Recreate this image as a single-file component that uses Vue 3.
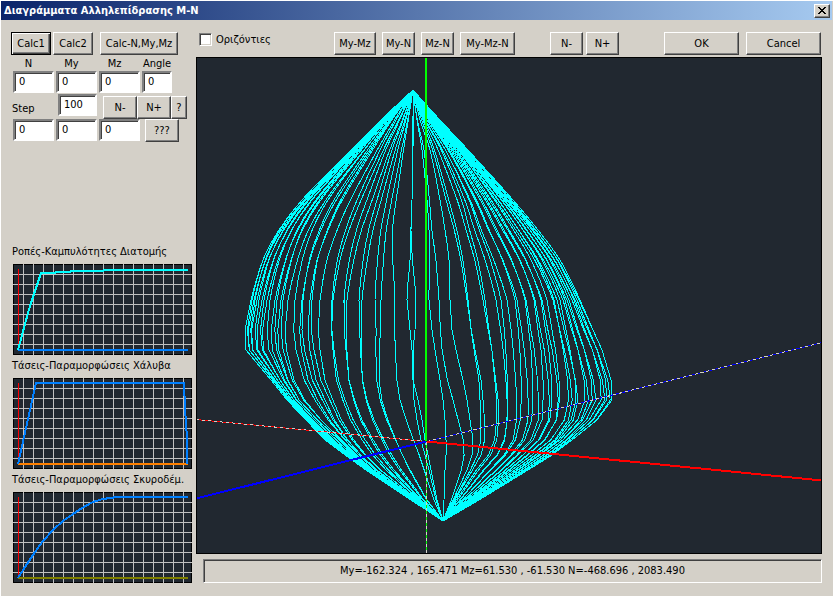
<script setup>

import { ref, reactive, computed } from "vue";


const horizontal = ref(false);

const step = ref("100");

const forces = reactive([
    { id: "n", label: "N", value: "0" },
    { id: "my", label: "My", value: "0" },
    { id: "mz", label: "Mz", value: "0" },
    { id: "angle", label: "Angle", value: "0" }
]);

const results = reactive([
    { id: "rn", label: "Result N", value: "0" },
    { id: "rmy", label: "Result My", value: "0" },
    { id: "rmz", label: "Result Mz", value: "0" }
]);

const range = {
    my: [-162.324, 165.471],
    mz: [61.530, -61.530],
    n: [-468.696, 2083.490]
};

const statusText = computed(() => {
    const f = pair => pair.map(v => v.toFixed(3)).join(" , ");
    return `My=${f(range.my)} Mz=${f(range.mz)} N=${f(range.n)}`;
});


// small charts, 179 x 91
const charts = [
    {
        id: "mk",
        title: "Ροπές-Καμπυλότητες Διατομής",
        points: "5,86 12,60 17,42 28,9 42,9 43,8 57,8 58,7 90,7 91,6 175,6",
        color: "#00ffff",
        base: "#0080ff"
    },
    {
        id: "steel",
        title: "Τάσεις-Παραμορφώσεις Χάλυβα",
        points: "5,86 23,5 171,5 172,30 174,60 174,86",
        color: "#0080ff",
        base: "#ff8000"
    },
    {
        id: "concrete",
        title: "Τάσεις-Παραμορφώσεις Σκυροδέμ.",
        points: "5,86 12,75 22,60 30,49 40,38 50,29 60,22 69,16 80,10 90,7 104,5 175,5",
        color: "#0080ff",
        base: "#808000"
    }
];

const gridX = Array.from({ length: 17 }, (_, i) => 10 + i * 10);
const gridY = Array.from({ length: 8 }, (_, i) => 10 + i * 10);


// interaction surface: meridians at fixed levels of N
const levels = [90, 120, 150, 200, 230, 260, 300, 330, 350, 380, 400, 420, 440, 455, 470, 500, 521];

const leftProfiles = [
    [413, 381, 351, 302, 279, 263, 251, 245, 246, 271, 287, 306, 325, 345, 366, 411, 443],
    [413, 387, 362, 322, 304, 293, 283, 280, 281, 289, 300, 318, 340, 355, 372, 415, 443],
    [413, 392, 373, 343, 329, 318, 311, 309, 311, 317, 326, 335, 348, 361, 377, 417, 443],
    [413, 402, 389, 371, 360, 352, 345, 344, 345, 347, 352, 359, 370, 379, 391, 420, 443],
    [413, 407, 400, 389, 383, 379, 375, 375, 374, 374, 377, 383, 391, 398, 406, 425, 443],
    [413, 409, 405, 398, 394, 394, 395, 393, 392, 391, 393, 399, 407, 413, 418, 430, 443],
    [413, 413, 413, 412, 411, 410, 407, 410, 412, 413, 414, 417, 421, 425, 429, 436, 443],
    [413, 413, 412, 412, 411, 413, 416, 415, 413, 413, 418, 422, 425, 428, 431, 437, 443]
];

const rightProfiles = [
    [413, 417, 422, 427, 429, 430, 429, 432, 435, 440, 443, 445, 446, 446, 445, 444, 443],
    [413, 418, 427, 431, 433, 437, 439, 439, 439, 441, 445, 449, 453, 454, 452, 447, 443],
    [413, 420, 430, 440, 445, 449, 450, 452, 456, 463, 467, 470, 473, 472, 467, 453, 443],
    [413, 423, 434, 448, 456, 462, 467, 470, 473, 478, 479, 480, 480, 477, 470, 454, 443],
    [413, 425, 441, 461, 469, 477, 484, 488, 491, 494, 496, 496, 494, 488, 476, 456, 443],
    [413, 428, 447, 472, 483, 495, 507, 510, 511, 512, 512, 511, 508, 500, 486, 461, 443],
    [413, 432, 455, 487, 504, 520, 534, 538, 541, 543, 543, 542, 533, 518, 502, 466, 443],
    [413, 436, 462, 502, 523, 542, 560, 566, 570, 575, 576, 571, 556, 536, 515, 473, 443],
    [413, 440, 468, 513, 538, 560, 580, 593, 602, 611, 612, 597, 572, 552, 528, 479, 443]
];

// position of every meridian at the N = 300 level
const leftLines = [
    251, 252, 254, 255, 257, 259, 262, 264, 267, 270, 275, 277, 281, 283, 288, 295,
    302, 303, 310, 312, 320, 332, 333, 344, 347, 359, 362, 375, 381, 395, 407, 416
];

const rightLines = [
    429, 439, 450, 467, 468, 483, 485, 496, 501, 507, 515, 517, 525, 526, 534, 535,
    541, 542, 547, 553, 554, 557, 560, 563, 565, 567, 569, 572, 574, 575, 577, 579, 580
];

const AT = levels.indexOf(300);

function valueAt(x, k, profiles) {
    const last = profiles.length - 1;
    const pos = Math.min(Math.max(x, profiles[0][AT]), profiles[last][AT]);

    let i = 0;
    while (i < last - 1 && profiles[i + 1][AT] < pos) i++;

    const a = profiles[i];
    const b = profiles[i + 1];
    const t = (pos - a[AT]) / (b[AT] - a[AT]);

    return a[k] + (b[k] - a[k]) * t;
}

// smooth in the compression part, straight segments below it
function toPath(xs) {
    const tangents = xs.map((_, i) => {
        const a = Math.max(i - 1, 0);
        const b = Math.min(i + 1, xs.length - 1);
        return (xs[b] - xs[a]) / (levels[b] - levels[a]);
    });

    let d = `M${xs[0]} ${levels[0]}`;
    for (let i = 1; i < xs.length; i++) {
        const end = `${xs[i].toFixed(1)} ${levels[i]}`;
        if (i > AT) {
            d += `L${end}`;
            continue;
        }
        const h = (levels[i] - levels[i - 1]) / 3;
        const c1 = (xs[i - 1] + tangents[i - 1] * h).toFixed(1);
        const c2 = (xs[i] - tangents[i] * h).toFixed(1);
        d += `C${c1} ${levels[i - 1] + h} ${c2} ${levels[i] - h} ${end}`;
    }
    return d;
}

// every second meridian lies on the far side and leans a little
function meridian(x, index, profiles) {
    const lean = index % 2 ? 1 / 25 : 0;
    return toPath(levels.map((y, k) => valueAt(x + (y - 300) * lean, k, profiles)));
}

const meridians = [
    ...leftLines.map((x, i) => meridian(x, i, leftProfiles)),
    ...rightLines.map((x, i) => meridian(x, i, rightProfiles))
];

</script>


<template>

<div class="dialog">

    <header class="titlebar">
        <h1>Διαγράμματα Αλληλεπίδρασης Μ-Ν</h1>
        <button class="close" type="button" aria-label="Close">
            <svg width="8" height="7" viewBox="0 0 8 7">
                <path d="M0 0h2v1h1v1h2v-1h1v-1h2v1h-1v1h-1v1h-1v1h1v1h1v1h1v1h-2v-1h-1v-1h-2v1h-1v1h-2v-1h1v-1h1v-1h1v-1h-1v-1h-1v-1h-1z" />
            </svg>
        </button>
    </header>

    <main class="body">

        <!-- input panel -->
        <aside class="side">

            <div class="row calc">
                <button class="btn default" type="button">Calc1</button>
                <button class="btn" type="button">Calc2</button>
                <button class="btn wide" type="button">Calc-N,My,Mz</button>
            </div>

            <div class="row fields">
                <div v-for="f in forces" :key="f.id" class="field">
                    <label :for="f.id">{{ f.label }}</label>
                    <input :id="f.id" v-model="f.value" type="text">
                </div>
            </div>

            <div class="row step">
                <label for="step">Step</label>
                <input id="step" v-model="step" type="text">
                <button class="btn first" type="button">N-</button>
                <button class="btn" type="button">N+</button>
                <button class="btn help" type="button">?</button>
            </div>

            <div class="row fields">
                <div v-for="r in results" :key="r.id" class="field">
                    <input :id="r.id" v-model="r.value" type="text" :aria-label="r.label">
                </div>
                <button class="btn query" type="button">???</button>
            </div>

            <div class="charts">
                <figure v-for="c in charts" :key="c.id">
                    <figcaption>{{ c.title }}</figcaption>
                    <svg viewBox="0 0 179 91" shape-rendering="crispEdges">
                        <rect width="179" height="91" fill="#000" />
                        <rect x="1" y="1" width="177" height="89" fill="#212830" />
                        <rect v-for="x in gridX" :key="'x' + x" :x="x" y="0" width="1" height="91" fill="#c0c0c0" />
                        <rect v-for="y in gridY" :key="'y' + y" x="0" :y="y" width="179" height="1" fill="#c0c0c0" />
                        <rect x="5" y="5" width="1" height="81" fill="#f00" />
                        <rect x="5" y="85" width="170" height="2" :fill="c.base" />
                        <polyline :points="c.points" fill="none" :stroke="c.color" stroke-width="2" />
                    </svg>
                </figure>
            </div>

        </aside>

        <!-- viewer -->
        <section class="view">

            <div class="row toolbar">
                <label class="check">
                    <input v-model="horizontal" type="checkbox">
                    <span>Οριζόντιες</span>
                </label>
                <div class="group planes">
                    <button class="btn" type="button">My-Mz</button>
                    <button class="btn small" type="button">My-N</button>
                    <button class="btn small" type="button">Mz-N</button>
                    <button class="btn large" type="button">My-Mz-N</button>
                </div>
                <div class="group">
                    <button class="btn small" type="button">N-</button>
                    <button class="btn small" type="button">N+</button>
                </div>
                <div class="group actions">
                    <button class="btn" type="button">OK</button>
                    <button class="btn" type="button">Cancel</button>
                </div>
            </div>

            <div class="canvas">
                <svg viewBox="197 58 624 495" shape-rendering="crispEdges" fill="none">
                    <g stroke="#00ffff">
                        <path v-for="(d, i) in meridians" :key="i" :d="d" />
                    </g>

                    <g stroke-width="1">
                        <path d="M196 419.5L426 441.5" stroke="#f00" />
                        <path d="M196 419.5L426 441.5" stroke="#d4d0c8" stroke-dasharray="3 3" />
                        <path d="M427 441.5L822 342.5" stroke="#00f" />
                        <path d="M427 441.5L822 342.5" stroke="#d4d0c8" stroke-dasharray="3 3" />
                        <path d="M426.5 442V554" stroke="#0f0" />
                        <path d="M426.5 442V554" stroke="#d4d0c8" stroke-dasharray="3 3" />
                    </g>

                    <g stroke-width="2">
                        <path d="M426 441.5L196 498.5" stroke="#00f" />
                        <path d="M427 441.5L822 480.5" stroke="#f00" />
                        <path d="M426 57V441" stroke="#0f0" />
                    </g>
                </svg>
            </div>

            <output class="status">{{ statusText }}</output>

        </section>

    </main>

</div>

</template>


<style>

body{
    background:#d4d0c8;
}

</style>


<style scoped>

.dialog{
    box-sizing:border-box;
    border-top:1px solid #fff;
    border-left:1px solid #fff;
    background:#d4d0c8;
    color:#000;
    font-family:"DejaVu Sans Condensed", "DejaVu Sans", sans-serif;
    font-size:11px;
    line-height:14px;
}

.dialog *{
    box-sizing:border-box;
}

button,
input{
    font:inherit;
    color:inherit;
    margin:0;
    border-radius:0;
}

.titlebar{
    display:flex;
    align-items:center;
    justify-content:space-between;
    height:19px;
    margin-right:1px;
    padding:0 2px 0 3px;
    background:linear-gradient(to right, #0a246a, #a6caf0);
}

.titlebar h1{
    margin:0;
    color:#fff;
    font-size:11px;
    font-weight:bold;
    white-space:nowrap;
}

.close{
    display:flex;
    align-items:center;
    justify-content:center;
    width:16px;
    height:14px;
    padding:0;
    background:#d4d0c8;
    border:1px solid;
    border-color:#fff #404040 #404040 #fff;
    box-shadow:inset -1px -1px #808080;
}

.body{
    display:grid;
    grid-template-columns:181px 1fr;
    gap:4px;
    padding:12px 11px 13px 10px;
}

.row{
    display:flex;
}

.btn{
    flex:none;
    width:34px;
    height:23px;
    padding:0;
    background:#d4d0c8;
    border:1px solid;
    border-color:#fff #404040 #404040 #fff;
    box-shadow:inset -1px -1px #808080;
    text-align:center;
    white-space:nowrap;
}

.btn.default{
    border-color:#000;
    box-shadow:inset 1px 1px #fff, inset -1px -1px #404040, inset -2px -2px #808080;
}

input[type="text"]{
    width:100%;
    height:22px;
    padding:0 4px 2px;
    background:#fff;
    border:2px solid;
    border-color:#808080 #fff #fff #808080;
    box-shadow:inset 1px 1px #404040;
    outline:none;
}

.side{
    display:flex;
    flex-direction:column;
}

.calc{
    gap:2px;
    margin-bottom:2px;
}

.calc .btn{
    width:40px;
}

.calc .btn.wide{
    width:78px;
    margin-left:5px;
}

.fields{
    gap:2px;
    padding-left:2px;
}

.field{
    width:41px;
}

.field label{
    display:block;
    padding-right:10px;
    text-align:center;
}

.field:nth-child(4){
    width:30px;
}

.field:nth-child(4) label{
    padding:0;
}

.btn.query{
    margin-left:3px;
}

.step{
    height:26px;
    padding:1px 0 0 1px;
}

.step label{
    width:46px;
    padding-top:8px;
}

.step input[type="text"]{
    width:39px;
}

.step .btn{
    margin-top:2px;
}

.step .first{
    margin-left:6px;
}

.step .help{
    width:16px;
}

.charts{
    margin-top:auto;
    padding-left:1px;
}

figure{
    margin:0;
}

figcaption{
    height:23px;
    line-height:22px;
    white-space:nowrap;
}

figure svg{
    display:block;
    width:179px;
    height:91px;
    margin-left:1px;
}

.view{
    min-width:0;
}

.toolbar{
    margin-bottom:2px;
    padding-left:3px;
    padding-right:1px;
}

.check{
    display:flex;
    gap:4px;
    width:135px;
    padding-top:1px;
}

.check input{
    appearance:none;
    width:13px;
    height:13px;
    background:#fff;
    border:1px solid;
    border-color:#808080 #fff #fff #808080;
    box-shadow:inset 1px 1px #404040, inset -1px -1px #d4d0c8;
}

.check input:checked{
    background:#404040;
}

.group{
    display:flex;
    gap:3px;
}

.planes{
    gap:6px;
    margin-right:35px;
}

.planes .btn{
    width:42px;
}

.planes .btn.small{
    width:33px;
}

.btn.small{
    width:33px;
}

.planes .btn.large{
    width:55px;
}

.actions{
    gap:7px;
    margin-left:auto;
}

.actions .btn{
    width:75px;
}

.canvas{
    border:1px solid #000;
    background:#212830;
}

.canvas svg{
    display:block;
    width:100%;
    height:auto;
}

.status{
    display:block;
    height:24px;
    margin:5px 0 0 7px;
    border:1px solid;
    border-color:#808080 #fff #fff #808080;
    box-shadow:inset 1px 1px #404040;
    line-height:22px;
    text-align:center;
}

</style>
